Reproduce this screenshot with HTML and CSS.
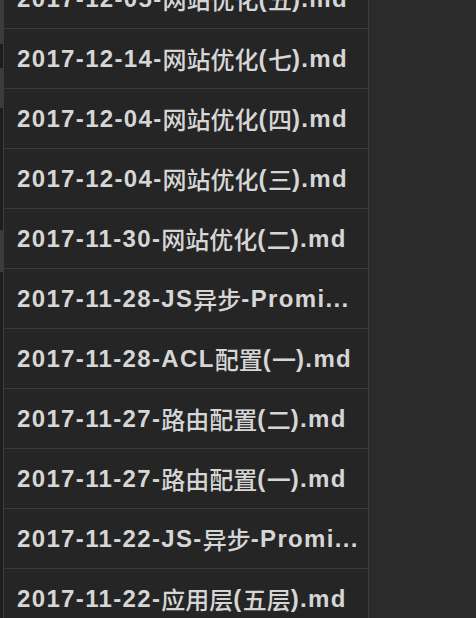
FILE: index.html
```html
<!DOCTYPE html>
<html lang="zh">
<head>
<meta charset="utf-8">
<link rel="stylesheet" href="styles.css">
</head>
<body>
<div class="app">
  <div class="edge">
    <span class="seg light s1"></span>
    <span class="seg dark s2"></span>
    <span class="seg light s3"></span>
    <span class="seg dark s4"></span>
    <span class="seg light s5"></span>
    <span class="seg dark s6"></span>
  </div>
  <ul class="list">
    <li class="row">2017-12-05-<span class="zh">网站优化</span>(<span class="zh">五</span>).md</li>
    <li class="row">2017-12-14-<span class="zh">网站优化</span>(<span class="zh">七</span>).md</li>
    <li class="row">2017-12-04-<span class="zh">网站优化</span>(<span class="zh">四</span>).md</li>
    <li class="row">2017-12-04-<span class="zh">网站优化</span>(<span class="zh">三</span>).md</li>
    <li class="row">2017-11-30-<span class="zh">网站优化</span>(<span class="zh">二</span>).md</li>
    <li class="row">2017-11-28-JS<span class="zh">异步</span>-Promi...</li>
    <li class="row">2017-11-28-ACL<span class="zh">配置</span>(<span class="zh">一</span>).md</li>
    <li class="row">2017-11-27-<span class="zh">路由配置</span>(<span class="zh">二</span>).md</li>
    <li class="row">2017-11-27-<span class="zh">路由配置</span>(<span class="zh">一</span>).md</li>
    <li class="row">2017-11-22-JS-<span class="zh">异步</span>-Promi...</li>
    <li class="row">2017-11-22-<span class="zh">应用层</span>(<span class="zh">五层</span>).md</li>
  </ul>
  <div class="rest"></div>
</div>
</body>
</html>
```
FILE: styles.css
```css
html, body {
  margin: 0;
  padding: 0;
  height: 100%;
  overflow: hidden;
  background: #2b2b2b;
}
.app {
  display: flex;
  height: 618px;
}
.edge {
  width: 3px;
  display: flex;
  flex-direction: column;
  background: #1d1d1d;
}
.seg { display: block; }
.light { background: #3b3b3b; }
.dark { background: #1d1d1d; }
.s1 { height: 44px; }
.s2 { height: 24px; }
.s3 { height: 40px; }
.s4 { height: 122px; }
.s5 { height: 42px; }
.s6 { flex: 1; }
.list {
  list-style: none;
  margin: -31px 0 0 0;
  padding: 0;
  width: 364px;
  background: #252525;
  border-left: 1px solid #3a3a3a;
  border-right: 1px solid #3e3e3e;
}
.row {
  height: 59px;
  border-bottom: 1px solid #3a3a3a;
  display: flex;
  align-items: center;
  padding: 0 8px 0 13px;
  font-family: "Liberation Sans", "Noto Sans CJK SC", sans-serif;
  font-weight: bold;
  font-size: 24px;
  letter-spacing: 1.35px;
  color: #d6d6d6;
  white-space: pre;
  overflow: hidden;
}
.zh {
  font-family: "Noto Sans CJK SC", sans-serif;
  font-weight: 500;
  letter-spacing: 0;
}
.rest { flex: 1; }
```
